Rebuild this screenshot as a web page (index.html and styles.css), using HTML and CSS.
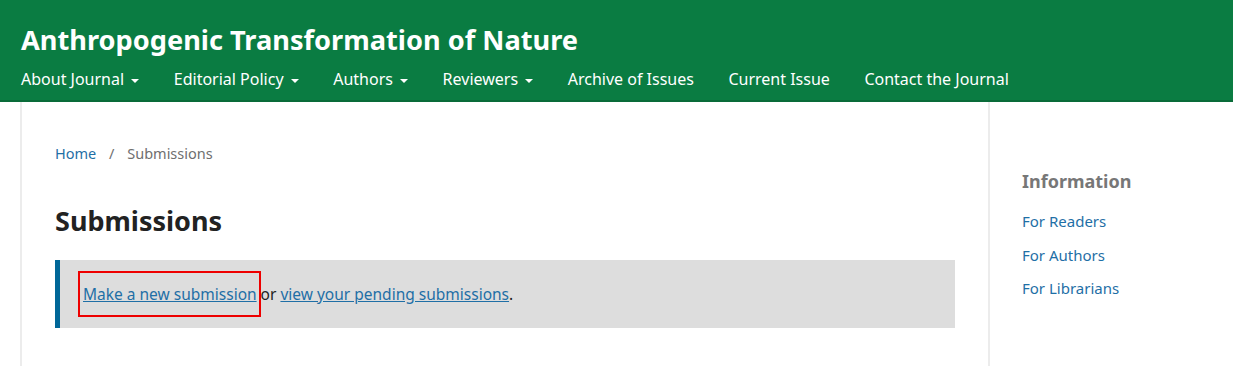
FILE: index.html
```html
<!DOCTYPE html>
<html lang="en">
<head>
    <meta charset="UTF-8">
    <title>Submissions | Anthropogenic Transformation of Nature</title>
    <link rel="stylesheet" href="styles.css">
</head>
<body>
    <header class="site-header">
        <div class="site-name">Anthropogenic Transformation of Nature</div>
        <nav class="primary-nav">
            <a href="#">About Journal <span class="caret"></span></a>
            <a href="#">Editorial Policy <span class="caret"></span></a>
            <a href="#">Authors <span class="caret"></span></a>
            <a href="#">Reviewers <span class="caret"></span></a>
            <a href="#">Archive of Issues</a>
            <a href="#">Current Issue</a>
            <a href="#">Contact the Journal</a>
        </nav>
    </header>

    <div class="page-wrap">
        <main class="main-col">
            <div class="breadcrumbs">
                <a href="#">Home</a>
                <span class="sep">/</span>
                <span class="current">Submissions</span>
            </div>
            <h1>Submissions</h1>
            <div class="notice">
                <a href="#" class="marked">Make a new submission</a> or <a href="#">view your pending submissions</a>.
            </div>
        </main>
        <aside class="sidebar">
            <h2>Information</h2>
            <ul>
                <li><a href="#">For Readers</a></li>
                <li><a href="#">For Authors</a></li>
                <li><a href="#">For Librarians</a></li>
            </ul>
        </aside>
    </div>
</body>
</html>
```

FILE: styles.css
```css
body {
    margin: 0;
    font-family: 'Noto Sans', Arial, sans-serif;
    background: #fff;
    color: #222;
}
a {
    color: #1f6fa6;
}
.site-header {
    background: #0a7c42;
    border-bottom: 2px solid #096b39;
    height: 102px;
    padding: 0 21px;
    box-sizing: border-box;
}
.site-name {
    color: #fff;
    font-size: 27.2px;
    font-weight: 700;
    padding-top: 23px;
    line-height: 34px;
}
.primary-nav {
    display: flex;
    gap: 34.5px;
    margin-top: 9px;
}
.primary-nav a {
    color: #fff;
    text-decoration: none;
    font-size: 16px;
    line-height: 26px;
}
.caret {
    display: inline-block;
    width: 0;
    height: 0;
    margin-left: 3px;
    vertical-align: middle;
    border-top: 4px solid #fff;
    border-left: 4px solid transparent;
    border-right: 4px solid transparent;
}
.page-wrap {
    display: flex;
    margin-left: 20px;
    border-left: 2px solid #ececec;
    min-height: 264px;
}
.main-col {
    width: 900px;
    padding: 0 33px 0 33px;
    border-right: 2px solid #ececec;
}
.breadcrumbs {
    font-size: 14.5px;
    margin-top: 41px;
    color: #6f6f6f;
}
.breadcrumbs a {
    text-decoration: none;
}
.breadcrumbs .sep {
    margin: 0 9px;
}
h1 {
    font-size: 27px;
    font-weight: 700;
    margin: 38px 0 19px;
    line-height: 40px;
}
.notice {
    background: #ddd;
    border-left: 5px solid #006798;
    padding: 22px 23px;
    font-size: 15.5px;
    line-height: 24px;
}
.marked {
    position: relative;
}
.marked::after {
    content: "";
    position: absolute;
    left: -5px;
    right: -4px;
    top: -12px;
    bottom: -12px;
    border: 2px solid #e00;
}
.sidebar {
    padding: 67px 32px 0;
}
.sidebar h2 {
    font-size: 18px;
    font-weight: 700;
    color: #777;
    margin: 0 0 18px;
}
.sidebar ul {
    list-style: none;
    margin: 0;
    padding: 0;
}
.sidebar li {
    font-size: 15px;
    line-height: 20px;
    margin-bottom: 13.5px;
}
.sidebar a {
    text-decoration: none;
}
```
